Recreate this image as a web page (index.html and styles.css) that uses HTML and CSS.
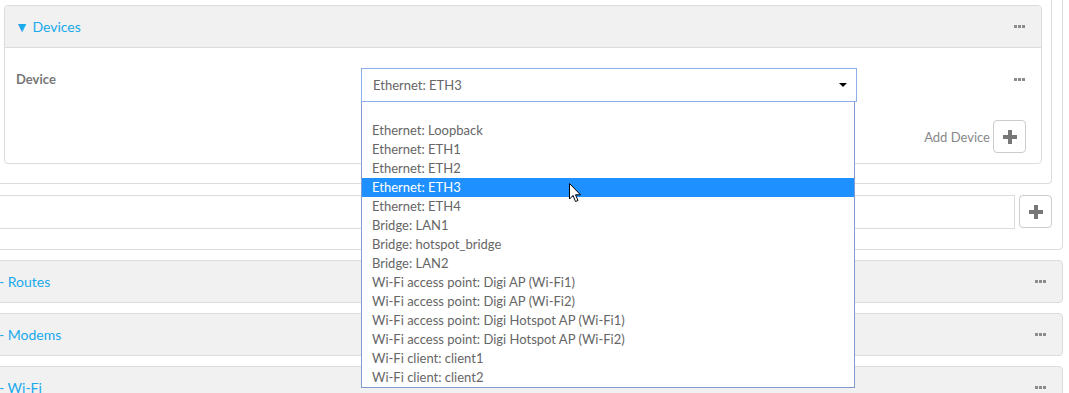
FILE: index.html
```html
<!DOCTYPE html>
<html lang="en">
<head>
    <meta charset="UTF-8">
    <meta name="viewport" content="width=device-width, initial-scale=1.0">
    <title>Network Interface - Devices</title>
    <link rel="stylesheet" href="styles.css">
</head>
<body>
    <div class="page">
        <div class="outer">
            <div class="inner">
                <div class="group">
                    <div class="group-head">
                        <span class="toggle">&#9660; Devices</span>
                        <span class="dots"><i></i><i></i><i></i></span>
                    </div>
                    <div class="group-body">
                        <div class="field-row">
                            <label class="field-label">Device</label>
                            <div class="select-wrap">
                                <div class="select">
                                    <span>Ethernet: ETH3</span>
                                    <span class="caret"></span>
                                </div>
                                <ul class="options">
                                    <li>&nbsp;</li>
                                    <li>Ethernet: Loopback</li>
                                    <li>Ethernet: ETH1</li>
                                    <li>Ethernet: ETH2</li>
                                    <li class="selected">Ethernet: ETH3</li>
                                    <li>Ethernet: ETH4</li>
                                    <li>Bridge: LAN1</li>
                                    <li>Bridge: hotspot_bridge</li>
                                    <li>Bridge: LAN2</li>
                                    <li>Wi-Fi access point: Digi AP (Wi-Fi1)</li>
                                    <li>Wi-Fi access point: Digi AP (Wi-Fi2)</li>
                                    <li>Wi-Fi access point: Digi Hotspot AP (Wi-Fi1)</li>
                                    <li>Wi-Fi access point: Digi Hotspot AP (Wi-Fi2)</li>
                                    <li>Wi-Fi client: client1</li>
                                    <li>Wi-Fi client: client2</li>
                                </ul>
                                <svg class="pointer" width="13" height="21" viewBox="0 0 13 21">
                                    <path d="M0.5 0.5 L0.5 16 L4 12.5 L6.5 18.5 L9 17.5 L6.5 11.8 L11.5 11.8 Z" fill="#fff" stroke="#000" stroke-width="1"/>
                                </svg>
                            </div>
                            <span class="dots"><i></i><i></i><i></i></span>
                        </div>
                        <div class="add-row">
                            <span class="add-label">Add Device</span>
                            <button class="plus-btn"><span class="plus"></span></button>
                        </div>
                    </div>
                </div>
            </div>
            <div class="input-row">
                <div class="text-input"></div>
                <button class="plus-btn"><span class="plus"></span></button>
            </div>
        </div>

        <div class="section">
            <span class="toggle">- Routes</span>
            <span class="dots"><i></i><i></i><i></i></span>
        </div>
        <div class="section">
            <span class="toggle">- Modems</span>
            <span class="dots"><i></i><i></i><i></i></span>
        </div>
        <div class="section">
            <span class="toggle">- Wi-Fi</span>
            <span class="dots"><i></i><i></i><i></i></span>
        </div>
    </div>
</body>
</html>
```

FILE: styles.css
```css
body {
    margin: 0;
    font-family: Lato, "Liberation Sans", sans-serif;
    background-color: #fff;
    overflow: hidden;
}

.page {
    margin-left: -20px;
    margin-right: 6px;
    margin-top: -20px;
}

.outer {
    border: 1px solid #dcdcdc;
    border-radius: 4px;
    padding: 0 0 20px 10px;
}

.inner {
    border: 1px solid #dcdcdc;
    border-top: none;
    border-radius: 0 0 4px 4px;
    margin-right: 10px;
    padding: 24px 9px 19px 12px;
}

.group {
    border: 1px solid #dcdcdc;
    border-radius: 4px;
}

.group-head {
    display: flex;
    align-items: center;
    justify-content: space-between;
    height: 41px;
    padding: 0 16px 0 10px;
    background-color: #f1f1f1;
    border-bottom: 1px solid #dcdcdc;
    border-radius: 4px 4px 0 0;
}

.toggle {
    color: #19a9ec;
    font-size: 14px;
}

.dots {
    display: flex;
    gap: 1px;
}

.dots i {
    display: block;
    width: 3px;
    height: 3px;
    background-color: #8c8c8c;
}

.group-body {
    padding: 20px 16px 10px 11px;
}

.field-row {
    display: flex;
    align-items: flex-start;
}

.field-label {
    width: 345px;
    padding-top: 3px;
    color: #777;
    font-size: 13px;
    font-weight: bold;
}

.select-wrap {
    position: relative;
    width: 496px;
}

.select {
    display: flex;
    align-items: center;
    justify-content: space-between;
    height: 32px;
    padding: 0 9px 0 11px;
    border: 1px solid #8eaeea;
    color: #666;
    font-size: 13px;
}

.caret {
    width: 0;
    height: 0;
    border-left: 4px solid transparent;
    border-right: 4px solid transparent;
    border-top: 4px solid #000;
}

.options {
    position: absolute;
    top: 34px;
    left: 0;
    z-index: 5;
    width: 492px;
    margin: 0;
    padding: 0;
    list-style: none;
    background: #fff;
    border: 1px solid #7f9bd0;
    border-top: none;
}

.options li {
    height: 19px;
    line-height: 19px;
    padding-left: 10px;
    color: #666;
    font-size: 13px;
    white-space: nowrap;
}

.options li.selected {
    background-color: #1e90ff;
    color: #fff;
}

.pointer {
    position: absolute;
    left: 208px;
    top: 115px;
    z-index: 6;
}

.field-row .dots {
    margin-left: auto;
    margin-top: 10px;
}

.add-row {
    display: flex;
    justify-content: flex-end;
    align-items: center;
    gap: 3px;
    margin-top: 18px;
    margin-right: -1px;
}

.add-label {
    color: #888;
    font-size: 13px;
}

.plus-btn {
    position: relative;
    width: 33px;
    height: 33px;
    padding: 0;
    background: #fff;
    border: 1px solid #ccc;
    border-radius: 4px;
}

.plus {
    position: absolute;
    left: 9px;
    top: 14px;
    width: 14px;
    height: 4px;
    background-color: #777;
}

.plus::after {
    content: "";
    position: absolute;
    left: 5px;
    top: -5px;
    width: 4px;
    height: 14px;
    background-color: #777;
}

.input-row {
    display: flex;
    align-items: flex-start;
    gap: 4px;
    margin-top: 11px;
    margin-right: 10px;
}

.text-input {
    flex: 1;
    height: 32px;
    border: 1px solid #dcdcdc;
}

.section {
    display: flex;
    align-items: center;
    justify-content: space-between;
    height: 41px;
    margin-top: 10px;
    padding: 0 16px 0 18px;
    background-color: #f1f1f1;
    border: 1px solid #dcdcdc;
    border-radius: 4px;
}
```
